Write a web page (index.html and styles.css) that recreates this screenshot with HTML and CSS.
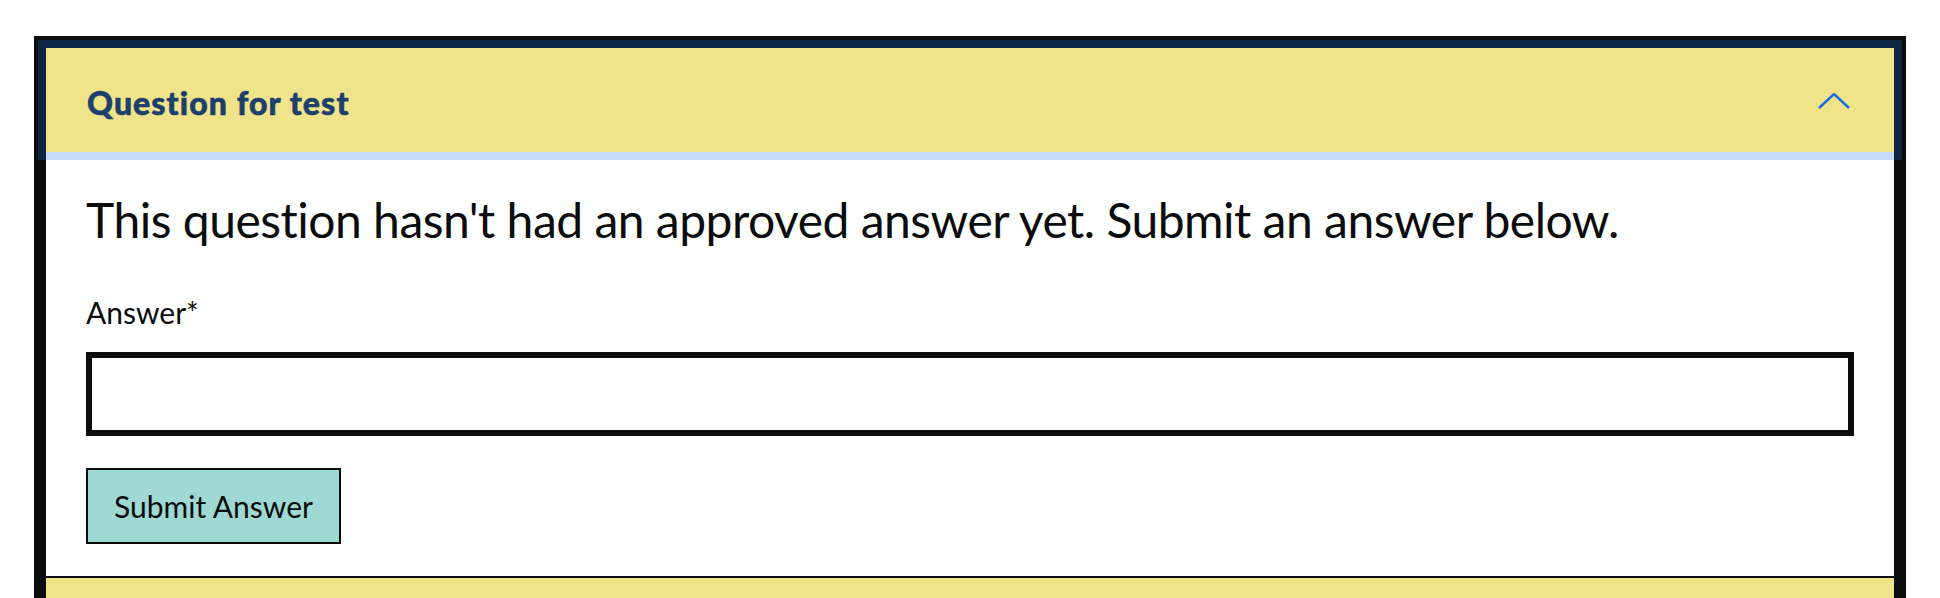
FILE: index.html
```html
<!DOCTYPE html>
<html lang="en">
<head>
<meta charset="utf-8">
<title>Question for test</title>
<link rel="stylesheet" href="styles.css">
</head>
<body>
<div class="page">
  <div class="accordion">
    <section class="item">
      <button class="item-header" type="button" aria-expanded="true">
        <span class="item-title">Question for test</span>
        <svg class="chevron" width="32" height="16" viewBox="0 0 32 16" aria-hidden="true">
          <polyline points="1,15 16,1 31,15" fill="none" stroke="#1d6fe0" stroke-width="2.5"/>
        </svg>
      </button>
      <div class="item-body">
        <p class="notice">This question hasn't had an approved answer yet. Submit an answer below.</p>
        <form class="answer-form">
          <label class="field-label" for="answer">Answer*</label>
          <input class="field-input" id="answer" type="text">
          <button class="submit" type="button">Submit Answer</button>
        </form>
      </div>
    </section>
    <section class="item">
      <div class="item-header closed" aria-expanded="false"></div>
    </section>
  </div>
</div>
</body>
</html>
```

FILE: styles.css
```css
html, body {
  margin: 0;
  padding: 0;
  background: #ffffff;
}

body {
  font-family: Lato, "Liberation Sans", sans-serif;
  color: #0b0c0c;
  overflow: hidden;
}

.page {
  padding: 36px 34px 0 34px;
}

.accordion {
  border: 12px solid #0b0c0c;
  border-bottom: none;
  background: #ffffff;
}

.item-header {
  display: flex;
  align-items: center;
  justify-content: space-between;
  width: 100%;
  height: 112px;
  box-sizing: border-box;
  margin: 0;
  padding: 0 44px 0 41px;
  border: none;
  border-bottom: 8px solid #c6dbf7;
  background: #f0e48a;
  box-shadow: -8px -8px 0 0 #0d2543, 8px -8px 0 0 #0d2543, -8px 0 0 0 #0d2543, 8px 0 0 0 #0d2543;
  position: relative;
  font: inherit;
  cursor: pointer;
}

.item-header.closed {
  border-bottom: none;
  border-top: 2px solid #0b0c0c;
  box-shadow: none;
}

.item-title {
  font-family: Lato, sans-serif;
  font-weight: 900;
  font-size: 32px;
  letter-spacing: 1.1px;
  color: #1c3f6b;
  margin-top: 4px;
  -webkit-text-stroke: 0.6px #1c3f6b;
}

.chevron {
  display: block;
  margin-top: 2px;
}

.item-body {
  padding: 30px 40px 32px 40px;
}

.notice {
  margin: 0;
  font-size: 48px;
  line-height: 60px;
  letter-spacing: -0.5px;
  color: #0b0c0c;
}

.answer-form {
  display: flex;
  flex-direction: column;
  align-items: flex-start;
}

.field-label {
  margin-top: 42px;
  font-size: 30px;
  line-height: 40px;
}

.field-input {
  margin: 20px 0 0 0;
  width: 100%;
  height: 84px;
  box-sizing: border-box;
  border: 6px solid #0b0c0c;
  border-radius: 0;
  padding: 0 12px;
  font: inherit;
  font-size: 30px;
  background: #ffffff;
  outline: none;
}

.submit {
  margin-top: 32px;
  height: 76px;
  padding: 0 26px;
  border: 2px solid #0b0c0c;
  border-radius: 0;
  background: #9fd9d4;
  color: #0b0c0c;
  font-family: Lato, sans-serif;
  font-size: 30px;
  line-height: 1;
  cursor: pointer;
}
```
